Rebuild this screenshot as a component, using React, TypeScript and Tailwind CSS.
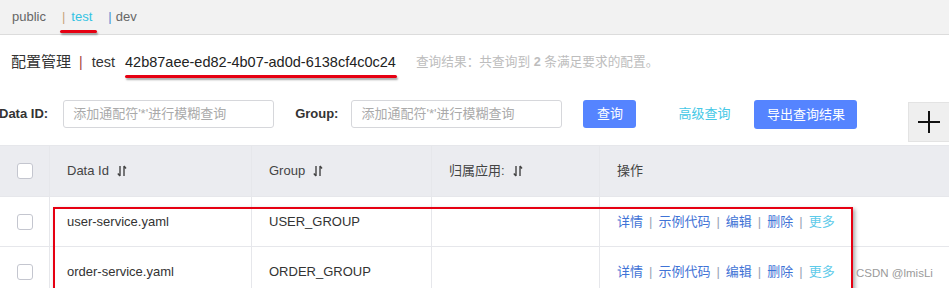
import type { ReactNode } from 'react'

const FONT = '"Liberation Sans", "Noto Sans CJK SC", Arial, sans-serif'

function SortIcon() {
  return (
    <svg width="10" height="12" viewBox="0 0 10 12" className="ml-[8px] inline-block">
      <path d="M3 1v10M3 11L0.8 8.5" stroke="#444" strokeWidth="1.4" fill="none" />
      <path d="M7 11V1M7 1l2 2.5" stroke="#444" strokeWidth="1.4" fill="none" />
    </svg>
  )
}

function Checkbox() {
  return <span className="block h-[16px] w-[16px] rounded-[3px] border border-[#c4c6cf] bg-white" />
}

function Cell({ children, className = '' }: { children?: ReactNode; className?: string }) {
  return (
    <div className={`flex items-center border-r border-[#e6e7eb] pl-[17px] ${className}`}>{children}</div>
  )
}

function Actions() {
  const sep = <span className="mx-[6px] text-[#9aa3b4]">|</span>
  return (
    <span className="text-[13px] text-[#3f73d6]">
      详情{sep}示例代码{sep}编辑{sep}删除{sep}
      <span className="text-[#5fcbea]">更多</span>
    </span>
  )
}

const rows = [
  { id: 'user-service.yaml', group: 'USER_GROUP' },
  { id: 'order-service.yaml', group: 'ORDER_GROUP' },
]

export default function App() {
  return (
    <div className="relative h-[288px] w-[949px] overflow-hidden bg-white text-[#333]" style={{ fontFamily: FONT }}>
      {/* namespace tabs */}
      <div className="flex h-[35px] items-center border-b border-[#dcdcdc] bg-[#f2f2f2] pl-[12px] text-[13px]">
        <span className="text-[#666]">public</span>
        <span className="ml-[16px] text-[#c9a47c]">|</span>
        <span className="ml-[6px] text-[#34c3e3]">test</span>
        <span className="ml-[16px] text-[#4a90d2]">|</span>
        <span className="ml-[4px] text-[#666]">dev</span>
      </div>

      {/* title */}
      <div className="flex h-[55px] items-center whitespace-nowrap pl-[11px]">
        <span className="text-[15px] text-[#333]">配置管理</span>
        <span className="ml-[8px] text-[14px] text-[#a23b3b]">|</span>
        <span className="ml-[9px] text-[14.5px] text-[#333]">test</span>
        <span className="ml-[10px] text-[14.5px] text-[#222]">42b87aee-ed82-4b07-ad0d-6138cf4c0c24</span>
        <span className="ml-[20px] text-[12.7px] text-[#bdbdbd]">
          查询结果：共查询到 <b className="font-bold">2</b> 条满足要求的配置。
        </span>
      </div>

      {/* search */}
      <div className="flex h-[55px] items-start whitespace-nowrap pt-[10px] text-[13px] [&>*]:shrink-0">
        <span className="-ml-[1px] flex h-[28px] items-center font-bold text-[#333]">Data ID:</span>
        <div className="ml-[15px] flex h-[28px] w-[211px] items-center rounded-[3px] border border-[#d6d7db] pl-[9px] text-[13px] text-[#aaa]">
          添加通配符'*'进行模糊查询
        </div>
        <span className="ml-[21px] flex h-[28px] items-center font-bold text-[#333]">Group:</span>
        <div className="ml-[13px] flex h-[28px] w-[211px] items-center rounded-[3px] border border-[#d6d7db] pl-[9px] text-[13px] text-[#aaa]">
          添加通配符'*'进行模糊查询
        </div>
        <button className="ml-[21px] flex h-[28px] w-[53px] items-center justify-center rounded-[3px] bg-[#5584ff] text-white">
          查询
        </button>
        <span className="ml-[42px] flex h-[28px] items-center text-[#44c8e6]">高级查询</span>
        <button className="ml-[24px] flex h-[29px] w-[103px] items-center justify-center rounded-[3px] bg-[#5584ff] text-white">
          导出查询结果
        </button>
        <div className="ml-[51px] mt-[2px] flex h-[40px] w-[42px] items-center justify-center border border-[#e3e3e3] bg-[#efefef]">
          <svg width="24" height="24" viewBox="0 0 24 24">
            <path d="M12 1v22M1 12h22" stroke="#111" strokeWidth="2" />
          </svg>
        </div>
      </div>

      {/* table */}
      <div className="grid grid-cols-[50px_202px_180px_168px_1fr] border-t border-[#e6e7eb] text-[13px]">
        <div className="flex h-[50px] items-center justify-center border-r border-[#e6e7eb] bg-[#ebecf0]">
          <Checkbox />
        </div>
        <Cell className="h-[50px] bg-[#ebecf0] text-[#444]">
          Data Id <SortIcon />
        </Cell>
        <Cell className="h-[50px] bg-[#ebecf0] text-[#444]">
          Group <SortIcon />
        </Cell>
        <Cell className="h-[50px] bg-[#ebecf0] text-[#444]">
          归属应用: <SortIcon />
        </Cell>
        <Cell className="h-[50px] border-r-0 bg-[#ebecf0] text-[#444]">操作</Cell>

        {rows.map((r) => (
          <div key={r.id} className="contents">
            <div className="flex h-[50px] items-center justify-center border-r border-t border-[#e6e7eb]">
              <Checkbox />
            </div>
            <Cell className="h-[50px] border-t">{r.id}</Cell>
            <Cell className="h-[50px] border-t">{r.group}</Cell>
            <Cell className="h-[50px] border-t" />
            <Cell className="h-[50px] border-r-0 border-t">
              <Actions />
            </Cell>
          </div>
        ))}
      </div>

      {/* annotations */}
      <div className="absolute left-[60px] top-[30px] h-[3px] w-[37px] rounded-full bg-[#e60012] shadow-[1px_2px_2px_rgba(0,0,0,0.35)]" />
      <div className="absolute left-[125px] top-[75px] h-[3px] w-[272px] rounded-full bg-[#e60012] shadow-[1px_2px_2px_rgba(0,0,0,0.35)]" />
      <div className="absolute left-[53px] top-[207px] h-[90px] w-[800px] border-2 border-[#e60012] shadow-[2px_2px_4px_rgba(0,0,0,0.35)]" />

      <span className="absolute left-[856px] top-[265px] text-[11.5px] text-[#9a9a9a]">CSDN @lmisLi</span>
    </div>
  )
}
